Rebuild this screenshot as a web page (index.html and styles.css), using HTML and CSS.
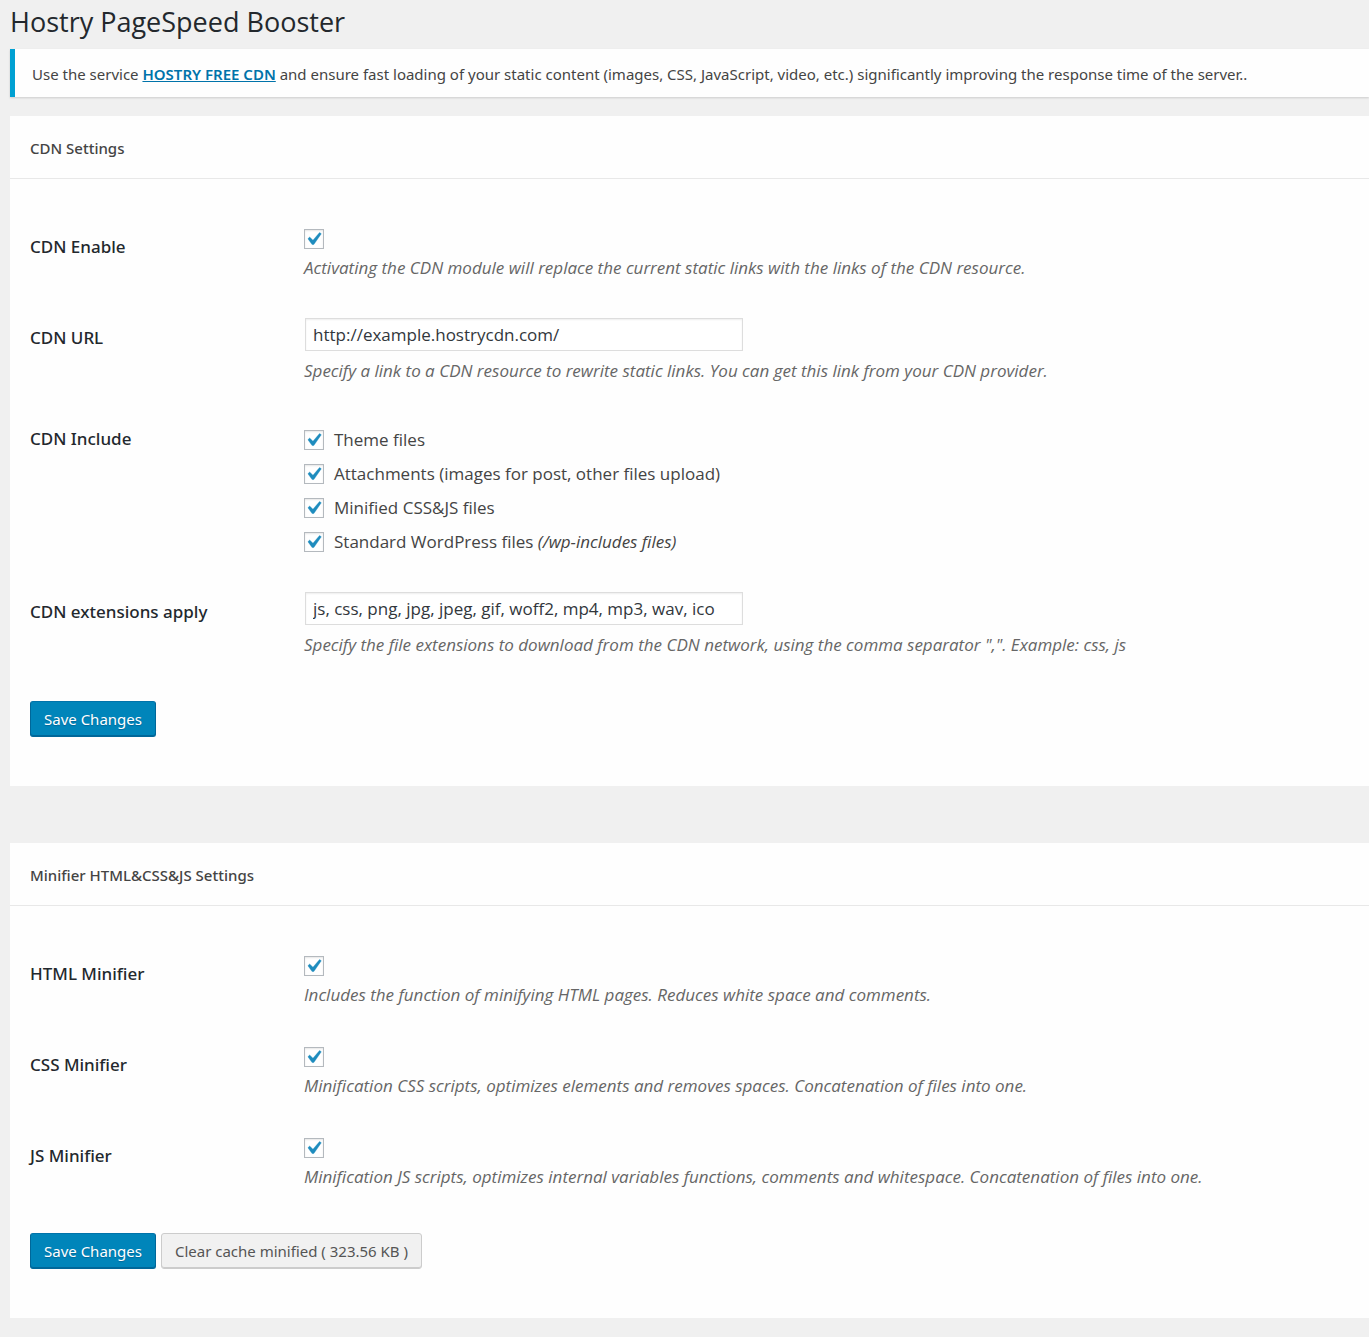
FILE: index.html
```html
<!DOCTYPE html>
<html lang="en">
<head>
<meta charset="utf-8">
<title>Hostry PageSpeed Booster</title>
<link rel="stylesheet" href="styles.css">
</head>
<body>
<main class="wrap">
  <h1 class="page-title">Hostry PageSpeed Booster</h1>
  <p class="notice">Use the service <a href="#cdn">HOSTRY FREE CDN</a> and ensure fast loading of your static content (images, CSS, JavaScript, video, etc.) significantly improving the response time of the server..</p>

  <form class="card" id="cdn">
    <h2 class="card-title">CDN Settings</h2>
    <div class="card-body">
      <div class="row compact-row">
        <label class="name" for="cdn-enable">CDN Enable</label>
        <div class="field">
          <input class="check" type="checkbox" id="cdn-enable" checked>
          <p class="description">Activating the CDN module will replace the current static links with the links of the CDN resource.</p>
        </div>
      </div>
      <div class="row text-row">
        <label class="name" for="cdn-url">CDN URL</label>
        <div class="field">
          <input class="text" type="text" id="cdn-url" value="http://example.hostrycdn.com/">
          <p class="description">Specify a link to a CDN resource to rewrite static links. You can get this link from your CDN provider.</p>
        </div>
      </div>
      <div class="row list-row" role="group" aria-labelledby="include-name">
        <span class="name" id="include-name">CDN Include</span>
        <div class="field options">
          <label class="option"><input class="check" type="checkbox" checked><span>Theme files</span></label>
          <label class="option"><input class="check" type="checkbox" checked><span>Attachments (images for post, other files upload)</span></label>
          <label class="option"><input class="check" type="checkbox" checked><span>Minified CSS&amp;JS files</span></label>
          <label class="option"><input class="check" type="checkbox" checked><span>Standard WordPress files <em>(/wp-includes files)</em></span></label>
        </div>
      </div>
      <div class="row text-row">
        <label class="name" for="cdn-ext">CDN extensions apply</label>
        <div class="field">
          <input class="text" type="text" id="cdn-ext" value="js, css, png, jpg, jpeg, gif, woff2, mp4, mp3, wav, ico">
          <p class="description">Specify the file extensions to download from the CDN network, using the comma separator ",". Example: css, js</p>
        </div>
      </div>
      <div class="actions">
        <button class="button primary" type="button">Save Changes</button>
      </div>
    </div>
  </form>

  <form class="card">
    <h2 class="card-title">Minifier HTML&amp;CSS&amp;JS Settings</h2>
    <div class="card-body">
      <div class="row">
        <label class="name" for="min-html">HTML Minifier</label>
        <div class="field">
          <input class="check" type="checkbox" id="min-html" checked>
          <p class="description">Includes the function of minifying HTML pages. Reduces white space and comments.</p>
        </div>
      </div>
      <div class="row">
        <label class="name" for="min-css">CSS Minifier</label>
        <div class="field">
          <input class="check" type="checkbox" id="min-css" checked>
          <p class="description">Minification CSS scripts, optimizes elements and removes spaces. Concatenation of files into one.</p>
        </div>
      </div>
      <div class="row">
        <label class="name" for="min-js">JS Minifier</label>
        <div class="field">
          <input class="check" type="checkbox" id="min-js" checked>
          <p class="description">Minification JS scripts, optimizes internal variables functions, comments and whitespace. Concatenation of files into one.</p>
        </div>
      </div>
      <div class="actions spaced">
        <button class="button primary" type="button">Save Changes</button>
        <button class="button" type="button">Clear cache minified ( 323.56 KB )</button>
      </div>
    </div>
  </form>
</main>
</body>
</html>
```
FILE: styles.css
```css
* {
  box-sizing: border-box;
}

body {
  margin: 0;
  background: #f0f0f0;
  color: #444;
  font: 17px/24px "Open Sans", "Noto Sans", sans-serif;
}

.wrap {
  padding: 0 0 19px 10px;
}

.page-title {
  margin: 0;
  padding-bottom: 5px;
  color: #23282d;
  font-size: 27px;
  line-height: 44px;
  font-weight: 400;
}

.notice {
  margin: 0 0 19px;
  padding: 13px 17px 11px;
  border-left: 5px solid #00a0d2;
  background: #fefefe;
  box-shadow: 0 1px 2px rgba(0, 0, 0, 0.15);
  font-family: "Noto Sans", sans-serif;
  font-size: 15px;
}

.notice a {
  color: #0073aa;
  font-weight: 600;
}

.card {
  margin-bottom: 57px;
  background: #fefefe;
}

.card:last-child {
  margin-bottom: 0;
}

.card-title {
  margin: 0;
  padding: 20px 20px 18px;
  border-bottom: 1px solid #e8e8e8;
  color: #444;
  font: 500 15px/24px "Noto Sans", sans-serif;
}

.card-body {
  padding: 50px 20px 49px;
}

.row {
  display: grid;
  grid-template-columns: 274px 1fr;
  min-height: 91px;
}

.name {
  padding-top: 6px;
  color: #23282d;
  font-family: "Noto Sans", sans-serif;
  font-weight: 500;
}

.description {
  margin: 7px 0 0;
  color: #666;
  font-style: italic;
}

.compact-row {
  min-height: 89px;
}

.text-row {
  min-height: 109px;
}

.text-row .name {
  padding-top: 8px;
}

.text-row .description {
  margin-top: 8px;
}

.list-row {
  min-height: 165px;
}

.list-row .name {
  padding-top: 0;
}

.check {
  display: block;
  flex: none;
  width: 20px;
  height: 20px;
  margin: 0;
  appearance: none;
  border: 1px solid #b4b9be;
  background: #fff url("data:image/svg+xml,%3Csvg xmlns='http://www.w3.org/2000/svg' viewBox='3.5 2.9 14 14'%3E%3Cpath d='M14.83 4.89l1.34.94-5.81 8.38H9.02L5.78 9.67l1.34-1.25 2.57 2.4z' fill='%231e8cbe' stroke='%231e8cbe' stroke-width='.3'/%3E%3C/svg%3E") center / 18px 18px no-repeat;
  box-shadow: inset 0 1px 2px rgba(0, 0, 0, 0.1);
}

.text {
  display: block;
  width: 438px;
  max-width: 100%;
  height: 33px;
  margin: 0 1px;
  padding: 0 7px;
  border: 1px solid #ddd;
  background: #fff;
  box-shadow: inset 0 1px 2px rgba(0, 0, 0, 0.07);
  color: #32373c;
  font: inherit;
}

.options {
  display: flex;
  flex-direction: column;
  gap: 10px;
  padding-top: 1px;
}

.option {
  display: flex;
  align-items: center;
  gap: 10px;
}

.actions {
  display: flex;
  gap: 5px;
}

.spaced {
  padding-top: 4px;
}

.button {
  height: 36px;
  padding: 0 13px;
  border: 1px solid #ccc;
  border-radius: 3px;
  background: #f1f1f1;
  box-shadow: inset 0 -1px 0 #ccc;
  color: #555;
  font: 15px/24px "Noto Sans", sans-serif;
}

.primary {
  border-color: #0073aa #006799 #006799;
  background: #0085ba;
  box-shadow: inset 0 -1px 0 #006799;
  color: #fff;
  text-shadow: 0 1px 1px #006799;
}
```
